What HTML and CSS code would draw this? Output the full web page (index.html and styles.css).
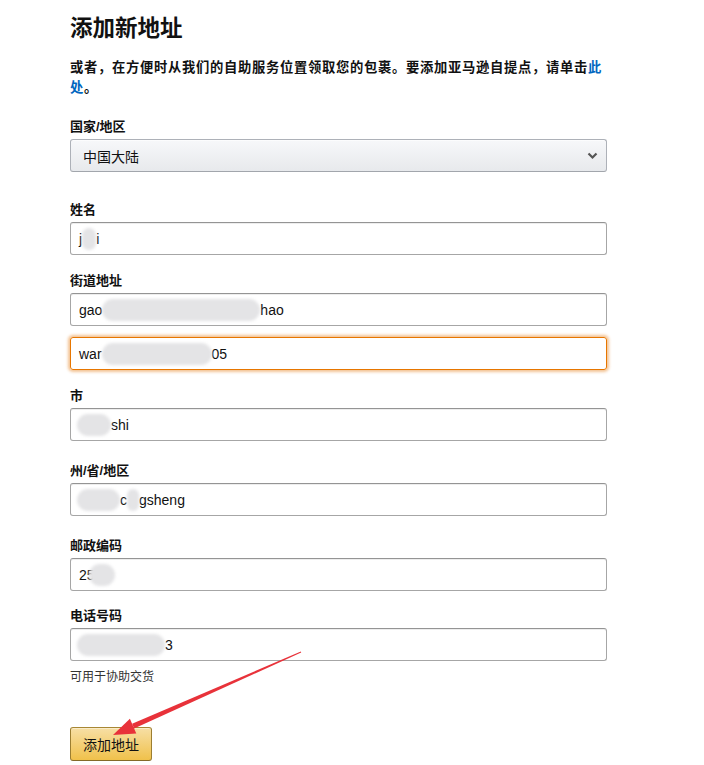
FILE: index.html
```html
<!DOCTYPE html>
<html lang="zh-CN">
<head>
    <meta charset="UTF-8">
    <meta name="viewport" content="width=device-width, initial-scale=1.0">
    <title>添加新地址</title>
    <link rel="stylesheet" href="styles.css">
</head>
<body>
    <div class="page">
        <h1 class="title">添加新地址</h1>
        <p class="intro">或者，在方便时从我们的自助服务位置领取您的包裹。要添加亚马逊自提点，请单击<a href="#">此处</a>。</p>

        <div class="field field-country">
            <label>国家/地区</label>
            <div class="select">
                <span>中国大陆</span>
                <svg class="chevron" width="11" height="8" viewBox="0 0 11 8">
                    <path d="M1.5 1.5 L5.5 5.5 L9.5 1.5" fill="none" stroke="#555" stroke-width="2.2"/>
                </svg>
            </div>
        </div>

        <div class="field field-tight">
            <label>姓名</label>
            <div class="input">j<span class="blur" style="width:14px"></span>i</div>
        </div>

        <div class="field field-tight">
            <label>街道地址</label>
            <div class="input">gao<span class="blur" style="width:158px"></span>hao</div>
            <div class="input focused">war<span class="blur" style="width:110px"></span>05</div>
        </div>

        <div class="field">
            <label>市</label>
            <div class="input"><span class="blur blur-start" style="width:34px"></span>shi</div>
        </div>

        <div class="field">
            <label>州/省/地区</label>
            <div class="input"><span class="blur blur-start" style="width:43px"></span>c<span class="blur" style="width:12px"></span>gsheng</div>
        </div>

        <div class="field field-close">
            <label>邮政编码</label>
            <div class="input">25<span class="blur blur-over" style="width:26px"></span></div>
        </div>

        <div class="field field-last">
            <label>电话号码</label>
            <div class="input"><span class="blur blur-start" style="width:88px"></span>3</div>
            <div class="hint">可用于协助交货</div>
        </div>

        <button class="submit">添加地址</button>
    </div>

    <svg class="arrow" width="704" height="765" viewBox="0 0 704 765">
        <polygon points="301.2,652.5 300.8,651.5 132.1,723.8 134.1,728.4" fill="#e8323a"/>
        <polygon points="113,735 136.3,733.4 129.9,718.8" fill="#e8323a"/>
    </svg>
</body>
</html>
```

FILE: styles.css
```css
* {
    margin: 0;
    padding: 0;
    box-sizing: border-box;
}

body {
    background-color: #fff;
    color: #111;
    font-family: "Liberation Sans", Arial, "Noto Sans CJK SC", sans-serif;
    position: relative;
}

.page {
    width: 537px;
    margin-left: 70px;
    padding-top: 14px;
}

.title {
    font-size: 22.5px;
    font-weight: bold;
    line-height: 29px;
    margin-bottom: 15px;
}

.intro {
    font-size: 13.3px;
    font-weight: bold;
    line-height: 20px;
    letter-spacing: 0.7px;
    margin-bottom: 20px;
}

.intro a {
    color: #0066c0;
    text-decoration: none;
}

.field {
    margin-bottom: 21px;
}

.field-country {
    margin-bottom: 29px;
}

.field-tight {
    margin-bottom: 17px;
}

.field-close {
    margin-bottom: 16px;
}

.field-last {
    margin-bottom: 42px;
}

label {
    display: block;
    font-size: 13px;
    font-weight: bold;
    line-height: 18px;
    margin-bottom: 3px;
}

.select {
    display: flex;
    align-items: center;
    justify-content: space-between;
    height: 33px;
    padding: 0 8px 0 12px;
    font-size: 14px;
    color: #111;
    border: 1px solid #adb1b8;
    border-bottom-color: #a2a6ac;
    border-radius: 3px;
    background: linear-gradient(to bottom, #f7f8fa, #e7e9ec);
    box-shadow: 0 1px 0 rgba(255, 255, 255, 0.6) inset;
}

.input {
    display: flex;
    align-items: center;
    height: 33px;
    padding: 0 8px;
    font-size: 14px;
    color: #111;
    border: 1px solid #a6a6a6;
    border-top-color: #949494;
    border-radius: 3px;
    box-shadow: 0 1px 0 rgba(255, 255, 255, 0.5), 0 1px 0 rgba(0, 0, 0, 0.07) inset;
    white-space: pre;
    overflow: hidden;
}

.input + .input {
    margin-top: 11px;
}

.input.focused {
    border-color: #e77600;
    box-shadow: 0 0 3px 2px rgba(228, 121, 17, 0.45);
    overflow: visible;
}

.blur {
    display: inline-block;
    height: 22px;
    background-color: #e4e4e6;
    border-radius: 11px;
    filter: blur(1.5px);
}

.blur-start {
    margin-left: -2px;
}

.blur-over {
    margin-left: -6px;
}

.hint {
    font-size: 12px;
    line-height: 16px;
    color: #333;
    margin-top: 8px;
}

.submit {
    font-family: "Liberation Sans", Arial, "Noto Sans CJK SC", sans-serif;
    font-size: 14px;
    color: #111;
    height: 34px;
    padding: 0 12px;
    border: 1px solid;
    border-color: #a88734 #9c7e31 #846a29;
    border-radius: 3px;
    background: linear-gradient(to bottom, #f7dfa5, #f0c14b);
    box-shadow: 0 1px 0 rgba(255, 255, 255, 0.4) inset;
    cursor: pointer;
}

.arrow {
    position: absolute;
    left: 0;
    top: 0;
    pointer-events: none;
}
```
